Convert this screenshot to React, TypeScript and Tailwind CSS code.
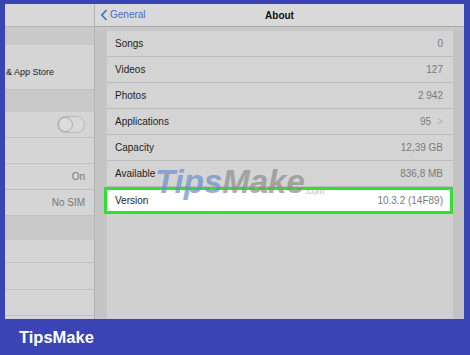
import React from 'react'

const rows = [
  { label: 'Songs', value: '0' },
  { label: 'Videos', value: '127' },
  { label: 'Photos', value: '2 942' },
  { label: 'Applications', value: '95', chevron: true },
  { label: 'Capacity', value: '12,39 GB' },
  { label: 'Available', value: '836,8 MB' },
]

function LeftRow({ h, children }: { h: string; children?: React.ReactNode }) {
  return (
    <div className={`${h} flex items-center justify-end pr-[9px] border-b border-[#c0c0c0] bg-[#d5d5d5]`}>
      {children}
    </div>
  )
}

export default function App() {
  return (
    <div
      className="w-[470px] h-[355px] bg-[#3a44b5] flex flex-col overflow-hidden"
      style={{ fontFamily: '"Liberation Sans", Arial, sans-serif' }}
    >
      <div className="mt-[4px] ml-[5px] w-[459px] h-[315px] flex bg-[#c7c7c7] relative">
        {/* left master list */}
        <div className="w-[90px] flex flex-col bg-[#d5d5d5] border-r border-[#b3b3b3]">
          <div className="h-[23px] bg-[#d8d8d8] border-b border-[#b5b5b5]" />
          <div className="h-[18px] bg-[#c9c9c9]" />
          <div className="h-[45px] flex items-end pb-[10px] pl-[1px] text-[9px] text-[#222] border-b border-[#c0c0c0] bg-[#d5d5d5]">
            &amp; App Store
          </div>
          <div className="h-[22px] bg-[#c9c9c9]" />
          <LeftRow h="h-[26px]">
            <div className="w-[28px] h-[17px] rounded-full border border-[#b8b8b8] bg-[#d9d9d9] flex items-center">
              <div className="w-[15px] h-[15px] rounded-full border border-[#a8a8a8] bg-[#dcdcdc]" />
            </div>
          </LeftRow>
          <LeftRow h="h-[26px]" />
          <LeftRow h="h-[26px]">
            <span className="text-[10px] text-[#777]">On</span>
          </LeftRow>
          <LeftRow h="h-[26px]">
            <span className="text-[10px] text-[#777]">No SIM</span>
          </LeftRow>
          <div className="h-[24px] bg-[#c9c9c9]" />
          <LeftRow h="h-[23px]" />
          <LeftRow h="h-[27px]" />
          <LeftRow h="h-[26px]" />
          <div className="flex-1" />
        </div>

        {/* right detail */}
        <div className="flex-1 flex flex-col">
          <div className="h-[23px] bg-[#d9d9d9] border-b border-[#a9a9a9] flex items-center relative">
            <div className="absolute left-[5px] top-[3px] flex items-center text-[#3f6fc4] text-[10px]">
              <svg width="8" height="12" viewBox="0 0 8 12" className="mr-[2px]">
                <path d="M6.5 1 L1.8 6 L6.5 11" fill="none" stroke="#3f6fc4" strokeWidth="1.6" />
              </svg>
              General
            </div>
            <div className="w-full text-center text-[10px] font-bold text-[#111]">About</div>
          </div>
          <div className="flex-1 flex pt-[4px]">
            <div className="w-[12px] bg-[#c5c5c5]" />
            <div className="flex-1 flex flex-col">
              {rows.map((r) => (
                <div
                  key={r.label}
                  className="h-[26px] bg-[#d4d4d4] border-b border-[#bdbdbd] flex items-center justify-between pl-[8px] pr-[10px] text-[10px]"
                >
                  <span className="text-[#1e1e1e]">{r.label}</span>
                  <span className="text-[#7a7a7a] flex items-center">
                    {r.value}
                    {r.chevron && <span className="ml-[6px] text-[#b0b0b0]">&gt;</span>}
                  </span>
                </div>
              ))}
              <div className="h-[27px] -ml-[3px] bg-white border-[3px] border-[#2fe02f] flex items-center justify-between pl-[8px] pr-[7px] text-[10px]">
                <span className="text-[#1e1e1e]">Version</span>
                <span className="text-[#7a7a7a]">10.3.2 (14F89)</span>
              </div>
              <div className="flex-1 bg-[#d0d0d0]" />
            </div>
            <div className="w-[11px] bg-[#c3c3c3]" />
          </div>
        </div>

        {/* watermark */}
        <div className="absolute left-[150px] top-[161px] flex items-end italic font-bold text-[33px] leading-none opacity-70 pointer-events-none">
          <span className="text-[#6b8fc4]">Tips</span>
          <span className="text-[#8d8d8d]">Make</span>
          <span className="text-[9px] not-italic font-normal text-[#9a9a9a] mb-[2px]">.com</span>
        </div>
      </div>
      <div className="flex-1 flex items-center pl-[19px]">
        <span className="text-white font-bold text-[16.5px]">TipsMake</span>
      </div>
    </div>
  )
}
